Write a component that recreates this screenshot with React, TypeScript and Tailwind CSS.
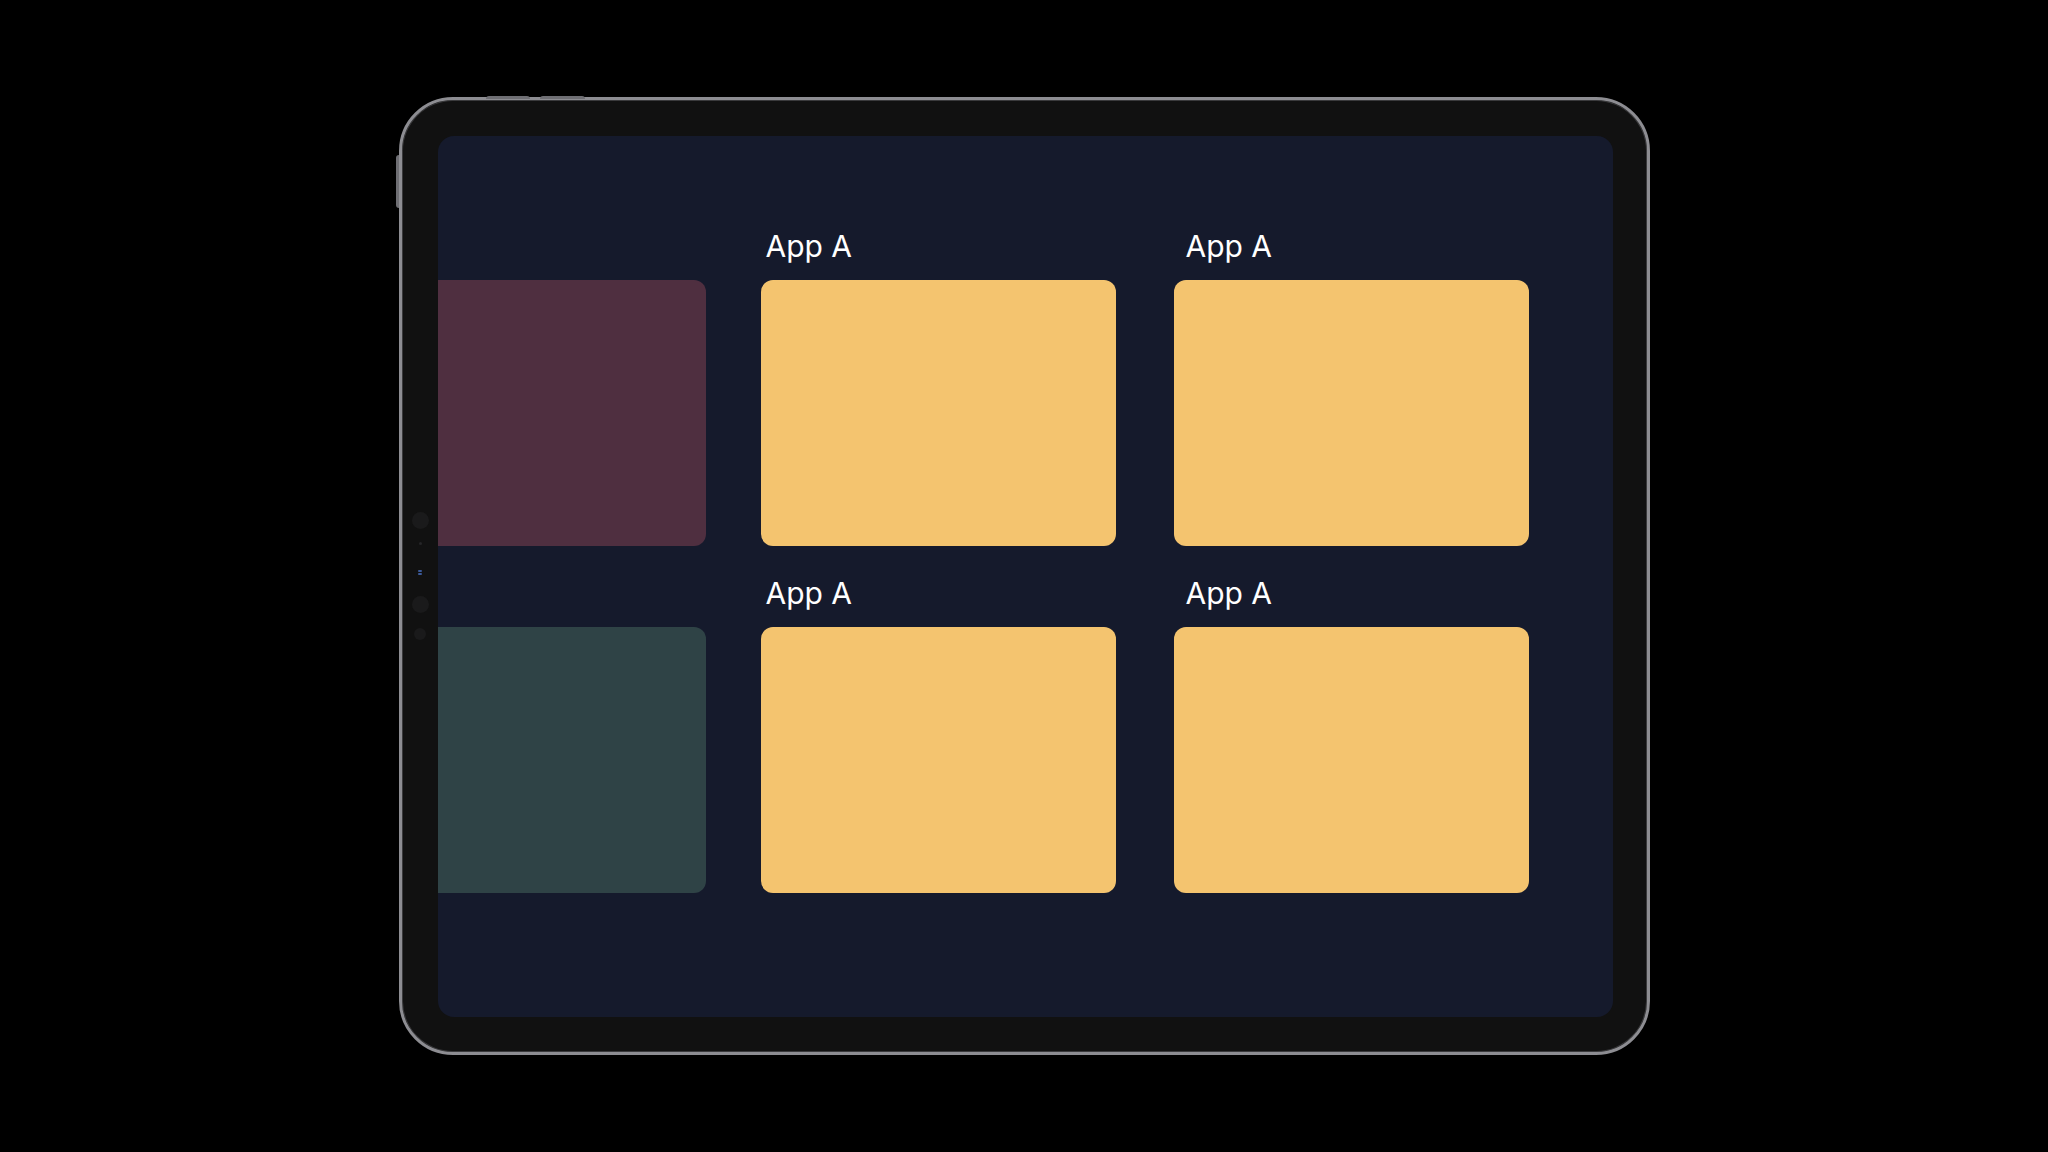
import React from 'react';

type Card = { color: string; label?: string; labelPad?: string };

const columns: { cards: Card[]; gap: string }[] = [
  { cards: [{ color: 'bg-[#4f2f40]' }, { color: 'bg-[#2f4346]' }], gap: '' },
  {
    cards: [
      { color: 'bg-[#f4c46f]', label: 'App A', labelPad: 'pl-[5px]' },
      { color: 'bg-[#f4c46f]', label: 'App A', labelPad: 'pl-[5px]' },
    ],
    gap: 'ml-[55px]',
  },
  {
    cards: [
      { color: 'bg-[#f4c46f]', label: 'App A', labelPad: 'pl-[12px]' },
      { color: 'bg-[#f4c46f]', label: 'App A', labelPad: 'pl-[12px]' },
    ],
    gap: 'ml-[58px]',
  },
];

const Sensors = () => (
  <div className="absolute left-[10px] top-1/2 -translate-y-1/2 flex flex-col items-center w-[17px]">
    <div className="w-[17px] h-[17px] rounded-full bg-[#1a1a1b]" />
    <div className="mt-[13px] w-[3px] h-[3px] rounded-full bg-[#262628]" />
    <div className="mt-[25px] flex flex-col gap-[1px] items-center">
      <div className="w-[4px] h-[2px] rounded-full bg-[#3b5a9a]" />
      <div className="w-[4px] h-[2px] rounded-full bg-[#3b5a9a]" />
    </div>
    <div className="mt-[21px] w-[17px] h-[17px] rounded-full bg-[#1a1a1b]" />
    <div className="mt-[15px] w-[12px] h-[12px] rounded-full bg-[#1a1a1b]" />
  </div>
);

const App = () => {
  return (
    <div className="w-[2048px] h-[1152px] bg-black flex items-center justify-center">
      <div className="relative w-[1251px] h-[958px] rounded-[54px] bg-[#111111] border-[3px] border-[#8d8d92] shadow-[inset_0_0_0_1px_#3a3a3c] pl-[36px] pr-[34px] pt-[36px] pb-[35px]">
        {/* hardware buttons */}
        <div className="absolute -top-[4px] left-[84px] w-[44px] h-[3px] rounded-t-sm bg-[#6e6e73]" />
        <div className="absolute -top-[4px] left-[138px] w-[45px] h-[3px] rounded-t-sm bg-[#6e6e73]" />
        <div className="absolute -left-[6px] top-[55px] w-[3px] h-[53px] rounded-l-sm bg-[#6e6e73]" />
        <Sensors />

        {/* screen */}
        <div className="w-full h-full rounded-[16px] bg-[#151a2c] overflow-hidden flex justify-end pr-[84px] pt-[92px]">
          {columns.map((col, i) => (
            <div key={i} className={`shrink-0 w-[355px] flex flex-col ${col.gap}`}>
              {col.cards.map((card, j) => (
                <div key={j} className={j > 0 ? 'mt-[29px]' : ''}>
                  <div
                    className={`h-9 mb-4 leading-9 text-[30px] text-white font-['Inter',sans-serif] ${card.labelPad ?? ''}`}
                  >
                    {card.label}
                  </div>
                  <div className={`h-[266px] rounded-[12px] ${card.color}`} />
                </div>
              ))}
            </div>
          ))}
        </div>
      </div>
    </div>
  );
};

export default App;
